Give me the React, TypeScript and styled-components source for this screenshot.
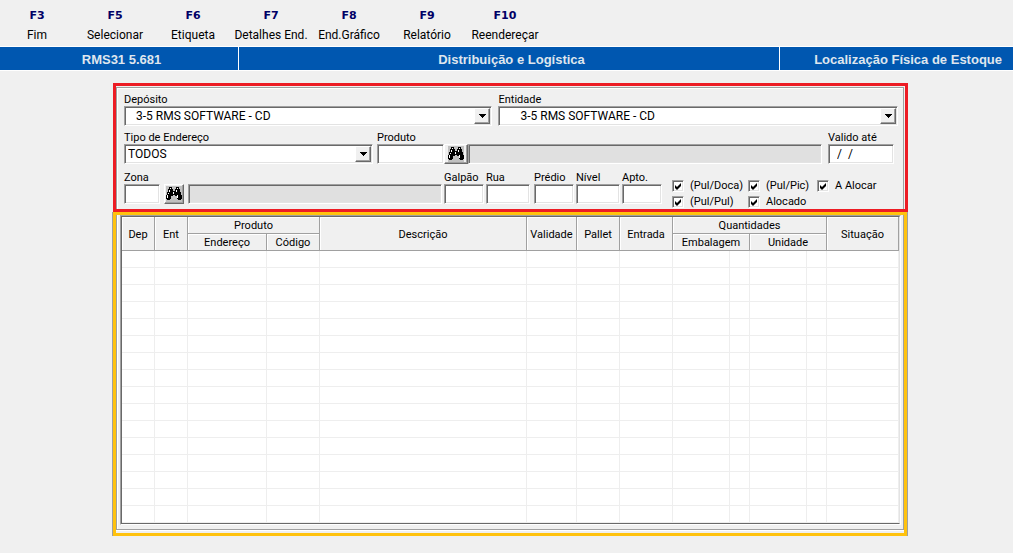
import React from "react";
import styled, { createGlobalStyle, css } from "styled-components";

const uiFont = `Roboto, "Liberation Sans", Arial, sans-serif`;
const line = "#a0a0a0";
const dark = "#696969";
const light = "#e3e3e3";

const GlobalStyle = createGlobalStyle`
  * { box-sizing: border-box; }
  body { margin: 0; background: #f0f0f0; color: #000; font: 12px/14px ${uiFont}; }
`;

const sunken = css`
  border: 1px solid;
  border-color: ${line} #fff #fff ${line};
  box-shadow: inset 1px 1px 0 ${dark}, inset -1px -1px 0 ${light};
`;

const raised = css`
  border: 1px solid;
  border-color: #fff ${dark} ${dark} #fff;
  box-shadow: inset -1px -1px 0 ${line};
`;

const Toolbar = styled.nav`
  display: flex;
  height: 46px;
  padding-top: 8px;
`;

const ToolButton = styled.button`
  flex: 0 0 78px;
  padding: 0;
  border: 0;
  background: none;
  color: #000;
  font: 12px/22px ${uiFont};
  white-space: nowrap;
  display: flex;
  flex-direction: column;
  align-items: center;

  &:first-child {
    flex-basis: 76px;
    padding-right: 2px;
  }
`;

const KeyName = styled.strong`
  color: #000066;
  font: bold 11px/16px "DejaVu Sans", Verdana, sans-serif;
`;

const TitleBar = styled.header`
  display: grid;
  grid-template-columns: 238fr 541fr 234fr;
  border: 1px solid #fff;
  border-width: 1px 0;
  background: #0057b0;
  color: #dfe6ee;
  font: bold 13px/23px "Liberation Sans", Arial, sans-serif;
`;

const TitleCell = styled.span<{ $align?: string }>`
  text-align: ${(p) => p.$align ?? "center"};
  padding: 1px 11px 0 16px;
  height: 23px;
  overflow: hidden;
  white-space: nowrap;

  & + & { border-left: 1px solid #fff; }
`;

const Main = styled.main`
  margin: 12px 105px 0 112px;
  padding-bottom: 17px;
`;

const Filters = styled.form`
  margin-left: 1px;
  padding: 1px 1px 0 0;
  border: 3px solid #ed1c24;
`;

const FilterBody = styled.div`
  display: flex;
  flex-direction: column;
  gap: 4px;
  padding: 4px 5px 5px 7px;
  border: 1px solid ${line};
  border-bottom: 0;
  box-shadow: inset 1px 1px 0 #fff;
`;

const Row = styled.div<{ $columns: string; $top?: number }>`
  display: grid;
  grid-template-columns: ${(p) => p.$columns};
  align-items: end;
  margin-top: ${(p) => p.$top ?? 0}px;
`;

const Field = styled.div<{ $gap?: number }>`
  display: flex;
  flex-direction: column;
  min-width: 0;
  margin-right: ${(p) => p.$gap ?? 0}px;
`;

const Label = styled.label`
  padding-top: 1px;
  font-size: 11px;
  line-height: 13px;
  white-space: nowrap;
`;

const TextBox = styled.input`
  ${sunken}
  width: 100%;
  height: 20px;
  padding: 0 8px;
  border-radius: 0;
  outline: 0;
  background: #fff;
  color: #000;
  font: 12px/14px ${uiFont};

  &:read-only { background: #e0e0e0; }
`;

const SelectBox = styled.div`
  ${sunken}
  display: grid;
  grid-template-columns: 1fr 16px;
  height: 20px;
  padding: 1px;
  background: #fff;
`;

const Select = styled.select<{ $indent: number }>`
  grid-area: 1 / 1 / 2 / 3;
  appearance: none;
  width: 100%;
  border: 0;
  border-radius: 0;
  outline: 0;
  padding: 0 18px 0 ${(p) => p.$indent}px;
  background: transparent;
  color: #000;
  font: 12px/14px ${uiFont};
`;

const Arrow = styled.span`
  ${raised}
  grid-area: 1 / 2;
  display: grid;
  place-items: center;
  background: #f0f0f0;
  pointer-events: none;
`;

const IconButton = styled.button`
  ${raised}
  display: grid;
  place-items: center;
  height: 20px;
  padding: 0;
  background: #f0f0f0;
`;

const Checks = styled.div`
  display: grid;
  grid-template-columns: 76px 69px 1fr;
  row-gap: 2px;
  margin-left: 10px;
  margin-bottom: -5px;
`;

const Check = styled.label`
  display: flex;
  align-items: center;
  gap: 6px;
  height: 14px;
  font-size: 11px;
  white-space: nowrap;
`;

const CheckInput = styled.input`
  ${sunken}
  appearance: none;
  flex: none;
  width: 12px;
  height: 12px;
  margin: 0;
  background: #fff;

  &:checked {
    background: #fff url("data:image/svg+xml,%3Csvg xmlns='http://www.w3.org/2000/svg' viewBox='0 0 10 10'%3E%3Cpath d='M2 4v3l2 2 4-4V2L4 6z'/%3E%3C/svg%3E") no-repeat;
  }
`;

const Results = styled.section`
  border: 1px solid ${line};
  border-width: 0 1px 0 1px;

  & > div {
    border: 3px solid #ffc20e;
    background: #f0f0f0;
  }
`;

const ResultsBody = styled.div`
  margin-bottom: 3px;
  padding: 0 2px 4px 3px;
  border: 1px solid ${line};
  border-top: 0;
  box-shadow: inset 1px 0 0 #fff, 0 1px 0 #fff;
`;

const GridFrame = styled.div`
  border: 1px solid;
  border-color: ${line} #fff #fff ${line};

  & > div {
    border: 1px solid;
    border-color: ${dark} ${light} ${dark} ${dark};
    background: #fff;
  }
`;

const Table = styled.table`
  width: 100%;
  table-layout: fixed;
  border-collapse: separate;
  border-spacing: 0;
  font: 11px/14px ${uiFont};

  th {
    height: 17px;
    padding: 2px 0 0;
    border: solid ${line};
    border-width: 0 1px 1px 0;
    background: #f0f0f0;
    box-shadow: inset 1px 1px 0 #fff;
    font-weight: 400;
    white-space: nowrap;
  }

  td {
    height: 17px;
    padding: 0;
    border: solid #eee;
    border-width: 0 1px 1px 0;
  }
`;

const Binoculars = () => (
  <svg width="16" height="16" viewBox="0 0 16 16" shapeRendering="crispEdges" aria-hidden="true">
    <path fill="#c0c0c0" d="M0 0h16v16H0z" />
    <path d="M3 1h3v2h1v2h2V3h1V1h3v2h1v3h1v3h1v4h-1v1h-3v-1h-1v-3H9V9H7v1H5v3H4v1H1v-1H0V9h1V6h1V3h1z" />
    <path fill="#fff" d="M4 2h1v1H4zM11 2h1v1h-1zM3 4h1v2H3zM10 4h1v2h-1zM2 7h1v1H2zM7 6h1v2H7zM1 9h1v3H1zM11 9h1v3h-1z" />
  </svg>
);

const Dropdown = ({ id, label, value, indent = 2, gap = 0 }: { id: string; label: string; value: string; indent?: number; gap?: number }) => (
  <Field $gap={gap}>
    <Label htmlFor={id}>{label}</Label>
    <SelectBox>
      <Select id={id} $indent={indent}>
        <option>{value}</option>
      </Select>
      <Arrow>
        <svg width="7" height="4" viewBox="0 0 7 4" shapeRendering="crispEdges" aria-hidden="true">
          <path d="M0 0h7v1H6v1H5v1H4v1H3V3H2V2H1V1H0z" />
        </svg>
      </Arrow>
    </SelectBox>
  </Field>
);

const Entry = ({ id, label, value = "", gap = 0 }: { id: string; label: string; value?: string; gap?: number }) => (
  <Field $gap={gap}>
    <Label htmlFor={id}>{label}</Label>
    <TextBox id={id} defaultValue={value} />
  </Field>
);

const commands = [
  ["F3", "Fim"],
  ["F5", "Selecionar"],
  ["F6", "Etiqueta"],
  ["F7", "Detalhes End."],
  ["F8", "End.Gráfico"],
  ["F9", "Relatório"],
  ["F10", "Reendereçar"],
];

const statuses = ["(Pul/Doca)", "(Pul/Pic)", "A Alocar", "(Pul/Pul)", "Alocado"];
const columnWidths = [33, 33, 79, 53, undefined, 50, 43, 53, 57, 20, 57, 20, 72];

export default function App() {
  return (
    <>
      <GlobalStyle />
      <Toolbar>
        {commands.map(([key, name]) => (
          <ToolButton key={key} type="button">
            <KeyName>{key}</KeyName>
            {name}
          </ToolButton>
        ))}
      </Toolbar>
      <TitleBar>
        <TitleCell>RMS31 5.681</TitleCell>
        <TitleCell>Distribuição e Logística</TitleCell>
        <TitleCell $align="right">Localização Física de Estoque</TitleCell>
      </TitleBar>
      <Main>
        <Filters>
          <FilterBody>
            <Row $columns="374fr 399fr">
              <Dropdown id="deposito" label="Depósito" value="3-5 RMS SOFTWARE - CD" indent={10} gap={6} />
              <Dropdown id="entidade" label="Entidade" value="3-5 RMS SOFTWARE - CD" indent={20} />
            </Row>
            <Row $columns="253fr 67px 24px 360fr 70px">
              <Dropdown id="tipo" label="Tipo de Endereço" value="TODOS" gap={4} />
              <Entry id="produto" label="Produto" />
              <IconButton type="button" aria-label="Buscar produto"><Binoculars /></IconButton>
              <Field $gap={6}><TextBox aria-label="Descrição do produto" readOnly /></Field>
              <Entry id="valido" label="Valido até" value="/  /" gap={4} />
            </Row>
            <Row $columns="40px 24px 1fr 42px 48px 42px 46px 40px 236px" $top={2}>
              <Entry id="zona" label="Zona" gap={4} />
              <Field $gap={4}><IconButton type="button" aria-label="Buscar zona"><Binoculars /></IconButton></Field>
              <Field $gap={2}><TextBox aria-label="Descrição da zona" readOnly /></Field>
              <Entry id="galpao" label="Galpão" gap={2} />
              <Entry id="rua" label="Rua" gap={4} />
              <Entry id="predio" label="Prédio" gap={2} />
              <Entry id="nivel" label="Nível" gap={2} />
              <Entry id="apto" label="Apto." />
              <Checks>
                {statuses.map((status) => (
                  <Check key={status}>
                    <CheckInput type="checkbox" defaultChecked />
                    {status}
                  </Check>
                ))}
              </Checks>
            </Row>
          </FilterBody>
        </Filters>
        <Results>
          <div>
            <ResultsBody>
              <GridFrame>
                <div>
                  <Table>
                    <colgroup>
                      {columnWidths.map((width, i) => <col key={i} width={width} />)}
                    </colgroup>
                    <thead>
                      <tr>
                        <th rowSpan={2}>Dep</th>
                        <th rowSpan={2}>Ent</th>
                        <th colSpan={2}>Produto</th>
                        <th rowSpan={2}>Descrição</th>
                        <th rowSpan={2}>Validade</th>
                        <th rowSpan={2}>Pallet</th>
                        <th rowSpan={2}>Entrada</th>
                        <th colSpan={4}>Quantidades</th>
                        <th rowSpan={2}>Situação</th>
                      </tr>
                      <tr>
                        <th>Endereço</th>
                        <th>Código</th>
                        <th colSpan={2}>Embalagem</th>
                        <th colSpan={2}>Unidade</th>
                      </tr>
                    </thead>
                    <tbody>
                      {Array.from({ length: 16 }, (_, row) => (
                        <tr key={row}>
                          {columnWidths.map((_, col) => <td key={col} />)}
                        </tr>
                      ))}
                    </tbody>
                  </Table>
                </div>
              </GridFrame>
            </ResultsBody>
          </div>
        </Results>
      </Main>
    </>
  );
}
